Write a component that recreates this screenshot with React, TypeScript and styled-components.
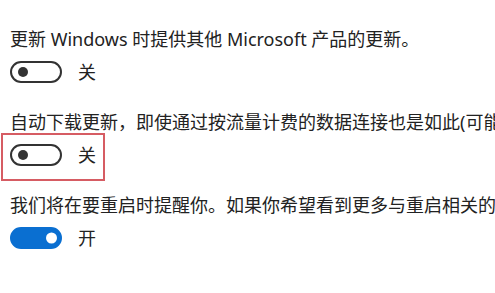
import React from 'react';
import styled, { createGlobalStyle } from 'styled-components';

const GlobalStyle = createGlobalStyle`
  html, body {
    margin: 0;
    padding: 0;
    background: #ffffff;
    overflow: hidden;
  }
  body {
    font-family: 'Noto Sans', 'Noto Sans CJK SC', sans-serif;
    color: #1f1f1f;
  }
`;

const Page = styled.div`
  width: 495px;
  height: 293px;
  padding: 27px 0 0 10px;
  box-sizing: border-box;
  display: flex;
  flex-direction: column;
  gap: 27px;
  overflow: hidden;
`;

const Setting = styled.div`
  display: flex;
  flex-direction: column;
  gap: 10px;
`;

const Description = styled.div`
  font-size: 18px;
  line-height: 24px;
  white-space: nowrap;
  color: #222222;
`;

const ToggleRow = styled.div`
  position: relative;
  display: flex;
  align-items: center;
  gap: 16px;
  height: 22px;
`;

// red annotation frame drawn over the row
const Highlight = styled.div`
  position: absolute;
  top: -11px;
  left: -9px;
  width: 104px;
  bottom: -15px;
  border: 2px solid #d65c63;
  box-sizing: border-box;
  pointer-events: none;
`;

const Track = styled.div<{ $on: boolean }>`
  position: relative;
  width: 52px;
  height: 22px;
  box-sizing: border-box;
  border-radius: 11px;
  border: 2px solid ${({ $on }) => ($on ? '#0a6fd1' : '#333333')};
  background: ${({ $on }) => ($on ? '#0a6fd1' : '#ffffff')};
`;

const Knob = styled.div<{ $on: boolean }>`
  position: absolute;
  top: 50%;
  width: ${({ $on }) => ($on ? 11 : 10)}px;
  height: ${({ $on }) => ($on ? 11 : 10)}px;
  border-radius: 50%;
  transform: translateY(-50%);
  background: ${({ $on }) => ($on ? '#ffffff' : '#333333')};
  left: ${({ $on }) => ($on ? 34 : 6)}px;
`;

const Label = styled.span`
  font-size: 18px;
  line-height: 22px;
  color: #222222;
`;

interface ToggleProps {
  on: boolean;
  highlight?: boolean;
}

function Toggle({ on, highlight }: ToggleProps) {
  return (
    <ToggleRow>
      <Track $on={on}>
        <Knob $on={on} />
      </Track>
      <Label>{on ? '开' : '关'}</Label>
      {highlight && <Highlight />}
    </ToggleRow>
  );
}

const settings = [
  { text: '更新 Windows 时提供其他 Microsoft 产品的更新。', on: false, highlight: false },
  { text: '自动下载更新，即使通过按流量计费的数据连接也是如此(可能会收取费用)', on: false, highlight: true },
  { text: '我们将在要重启时提醒你。如果你希望看到更多与重启相关的通知，请打开此设置。', on: true, highlight: false }
];

function App() {
  return (
    <>
      <GlobalStyle />
      <Page>
        {settings.map((item) => (
          <Setting key={item.text}>
            <Description>{item.text}</Description>
            <Toggle on={item.on} highlight={item.highlight} />
          </Setting>
        ))}
      </Page>
    </>
  );
}

export default App;
